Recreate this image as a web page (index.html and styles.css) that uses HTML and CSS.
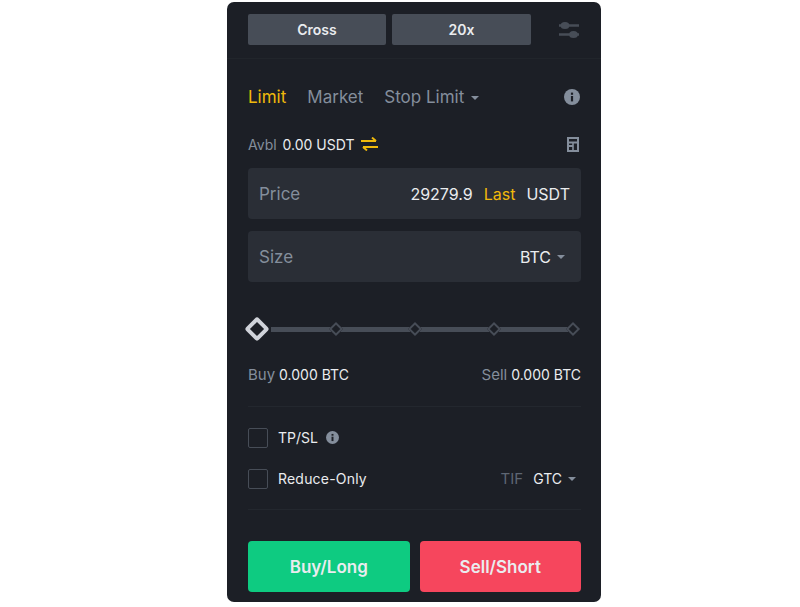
FILE: index.html
```html
<!doctype html>
<html>
<head>
<meta charset="utf-8">
<link rel="stylesheet" href="styles.css">
<title>Order form</title>
</head>

<body>

<div class="panel">
	<div class="top">
		<div class="top-btn">Cross</div>
		<div class="top-btn">20x</div>
		<svg class="sliders" width="22" height="20" viewBox="0 0 22 20">
			<path d="M1 5.5h20M1 14.5h20" stroke="#474d57" stroke-width="2.4"/>
			<ellipse cx="7" cy="5.5" rx="4.4" ry="3.6" fill="#474d57"/>
			<ellipse cx="15.5" cy="14.5" rx="4.4" ry="3.6" fill="#474d57"/>
		</svg>
	</div>

	<div class="tabs">
		<span class="tab active">Limit</span>
		<span class="tab">Market</span>
		<span class="tab">Stop Limit</span>
		<i class="caret caret-tab"></i>
		<svg class="info-big" width="16" height="16" viewBox="0 0 16 16">
			<circle cx="8" cy="8" r="8" fill="#848e9c"/>
			<rect x="6.9" y="7" width="2.2" height="5.4" fill="#1c1f26"/>
			<rect x="6.9" y="3.6" width="2.2" height="2.2" fill="#1c1f26"/>
		</svg>
	</div>

	<div class="avbl">
		<span class="muted">Avbl</span>
		<span class="avbl-val">0.00 USDT</span>
		<svg class="swap" width="17" height="14" viewBox="0 0 17 14">
			<path d="M0 4h15M11 .6 15 4M17 10H2M6 13.4 2 10" fill="none" stroke="#f0b90b" stroke-width="2"/>
		</svg>
		<svg class="calc" width="12" height="15" viewBox="0 0 12 15">
			<path fill="#848e9c" fill-rule="evenodd" d="M0 0h12v15H0zM2 2v2.5h8V2zM2 6.5V8h3.2V6.5zM6.8 6.5V13H10V6.5zM2 10v3h3.2v-3z"/>
		</svg>
	</div>

	<div class="field field-price">
		<span class="field-label">Price</span>
		<span class="field-val">29279.9</span>
		<span class="last">Last</span>
		<span class="field-unit">USDT</span>
	</div>
	<div class="field field-size">
		<span class="field-label">Size</span>
		<span class="field-unit">BTC</span>
		<i class="caret caret-size"></i>
	</div>

	<div class="slider">
		<i class="knob"></i>
		<i class="seg seg-first"></i><i class="dot"></i>
		<i class="seg"></i><i class="dot"></i>
		<i class="seg"></i><i class="dot"></i>
		<i class="seg"></i><i class="dot"></i>
	</div>

	<div class="amounts">
		<div><span class="muted">Buy</span> <span class="amount">0.000 BTC</span></div>
		<div><span class="muted">Sell</span> <span class="amount">0.000 BTC</span></div>
	</div>

	<div class="options">
		<div class="opt">
			<i class="check"></i>
			<span>TP/SL</span>
			<svg class="info-small" width="13" height="13" viewBox="0 0 16 16">
				<circle cx="8" cy="8" r="8" fill="#848e9c"/>
				<rect x="6.8" y="7" width="2.4" height="5.4" fill="#1c1f26"/>
				<rect x="6.8" y="3.6" width="2.4" height="2.2" fill="#1c1f26"/>
			</svg>
		</div>
		<div class="opt">
			<i class="check"></i>
			<span class="reduce">Reduce-Only</span>
			<span class="tif">TIF</span>
			<span class="gtc">GTC</span>
			<i class="caret caret-gtc"></i>
		</div>
	</div>

	<div class="actions">
		<div class="action buy">Buy/Long</div>
		<div class="action sell">Sell/Short</div>
	</div>
</div>

</body>
</html>
```

FILE: styles.css
```css
*
{
	margin:0;
	padding:0;
	box-sizing:border-box;
}
body
{
	background:#fff;
	font-family:"Inter","Noto Sans",sans-serif;
	color:#eaecef;
}
i
{
	display:block;
}
.panel
{
	width:374px;
	height:600px;
	margin:2px 0 0 227px;
	background:#1c1f26;
	border-radius:7px;
	padding:0 20px 0 21px;
	display:flex;
	flex-direction:column;
}
.top
{
	display:flex;
	align-items:center;
	gap:6px;
	height:57px;
	margin:0 -20px 0 -21px;
	padding:12px 21px 13px;
	border-bottom:1px solid #21252b;
}
.top-btn
{
	width:138px;
	height:31px;
	background:#474d57;
	border-radius:2px;
	font-size:14px;
	font-weight:600;
	display:flex;
	align-items:center;
	justify-content:center;
}
.top-btn + .top-btn
{
	width:139px;
}
.sliders
{
	margin-left:auto;
}
.tabs
{
	display:flex;
	align-items:center;
	margin-top:26px;
	height:24px;
	font-size:17px;
	color:#848e9c;
}
.tab
{
	margin-right:21px;
}
.active
{
	color:#f0b90b;
}
.caret
{
	width:0;
	height:0;
	border-left:4px solid transparent;
	border-right:4px solid transparent;
	border-top:4px solid #848e9c;
}
.caret-tab
{
	margin:1px 0 0 -14px;
}
.info-big
{
	margin-left:auto;
	margin-right:1px;
}
.avbl
{
	display:flex;
	align-items:center;
	margin-top:23px;
	height:24px;
	font-size:14px;
}
.muted
{
	color:#848e9c;
}
.avbl-val
{
	margin-left:6px;
}
.swap
{
	margin-left:6px;
}
.calc
{
	margin-left:auto;
	margin-right:2px;
}
.field
{
	display:flex;
	align-items:center;
	height:51px;
	padding:0 11px;
	background:#2a2e36;
	border-radius:4px;
	font-size:16px;
}
.field-price
{
	margin-top:12px;
}
.field-size
{
	margin-top:12px;
}
.field-label
{
	color:#848e9c;
	font-size:17px;
	margin-right:auto;
}
.last
{
	color:#f0b90b;
	margin:0 11px;
}
.caret-size
{
	margin:0 5px 0 6px;
}
.slider
{
	display:flex;
	align-items:center;
	margin-top:34px;
	height:26px;
	padding-right:3px;
}
.knob
{
	width:18px;
	height:18px;
	border:4px solid #d0d3da;
	border-radius:3px;
	transform:rotate(45deg);
	margin-right:5px;
	flex:none;
}
.seg
{
	flex:1;
	height:5px;
	background:#474d57;
}
.seg-first
{
	flex:none;
	width:60px;
}
.dot
{
	width:10px;
	height:10px;
	border:2px solid #474d57;
	background:#1c1f26;
	transform:rotate(45deg);
	flex:none;
}
.amounts
{
	display:flex;
	justify-content:space-between;
	margin-top:20px;
	height:24px;
	align-items:center;
	font-size:14px;
}
.amounts .muted
{
	font-size:15px;
}
.options
{
	margin-top:20px;
	padding:10px 0;
	border-top:1px solid #23272e;
	border-bottom:1px solid #23272e;
	display:flex;
	flex-direction:column;
	gap:21px;
	height:104px;
	justify-content:center;
}
.opt
{
	display:flex;
	align-items:center;
	height:20px;
	font-size:14px;
}
.check
{
	width:20px;
	height:20px;
	border:1px solid #474d57;
	border-radius:2px;
	margin-right:10px;
}
.reduce
{
	letter-spacing:.2px;
}
.info-small
{
	margin-left:8px;
}
.tif
{
	margin-left:auto;
	color:#5e6673;
	font-size:15px;
}
.gtc
{
	margin-left:10px;
}
.caret-gtc
{
	margin:0 5px 0 6px;
}
.actions
{
	display:flex;
	gap:10px;
	margin-top:31px;
}
.action
{
	flex:1;
	height:51px;
	border-radius:4px;
	display:flex;
	align-items:center;
	justify-content:center;
	font-size:17px;
	font-weight:600;
}
.buy
{
	background:#0ecb81;
}
.sell
{
	background:#f6465d;
}
```
